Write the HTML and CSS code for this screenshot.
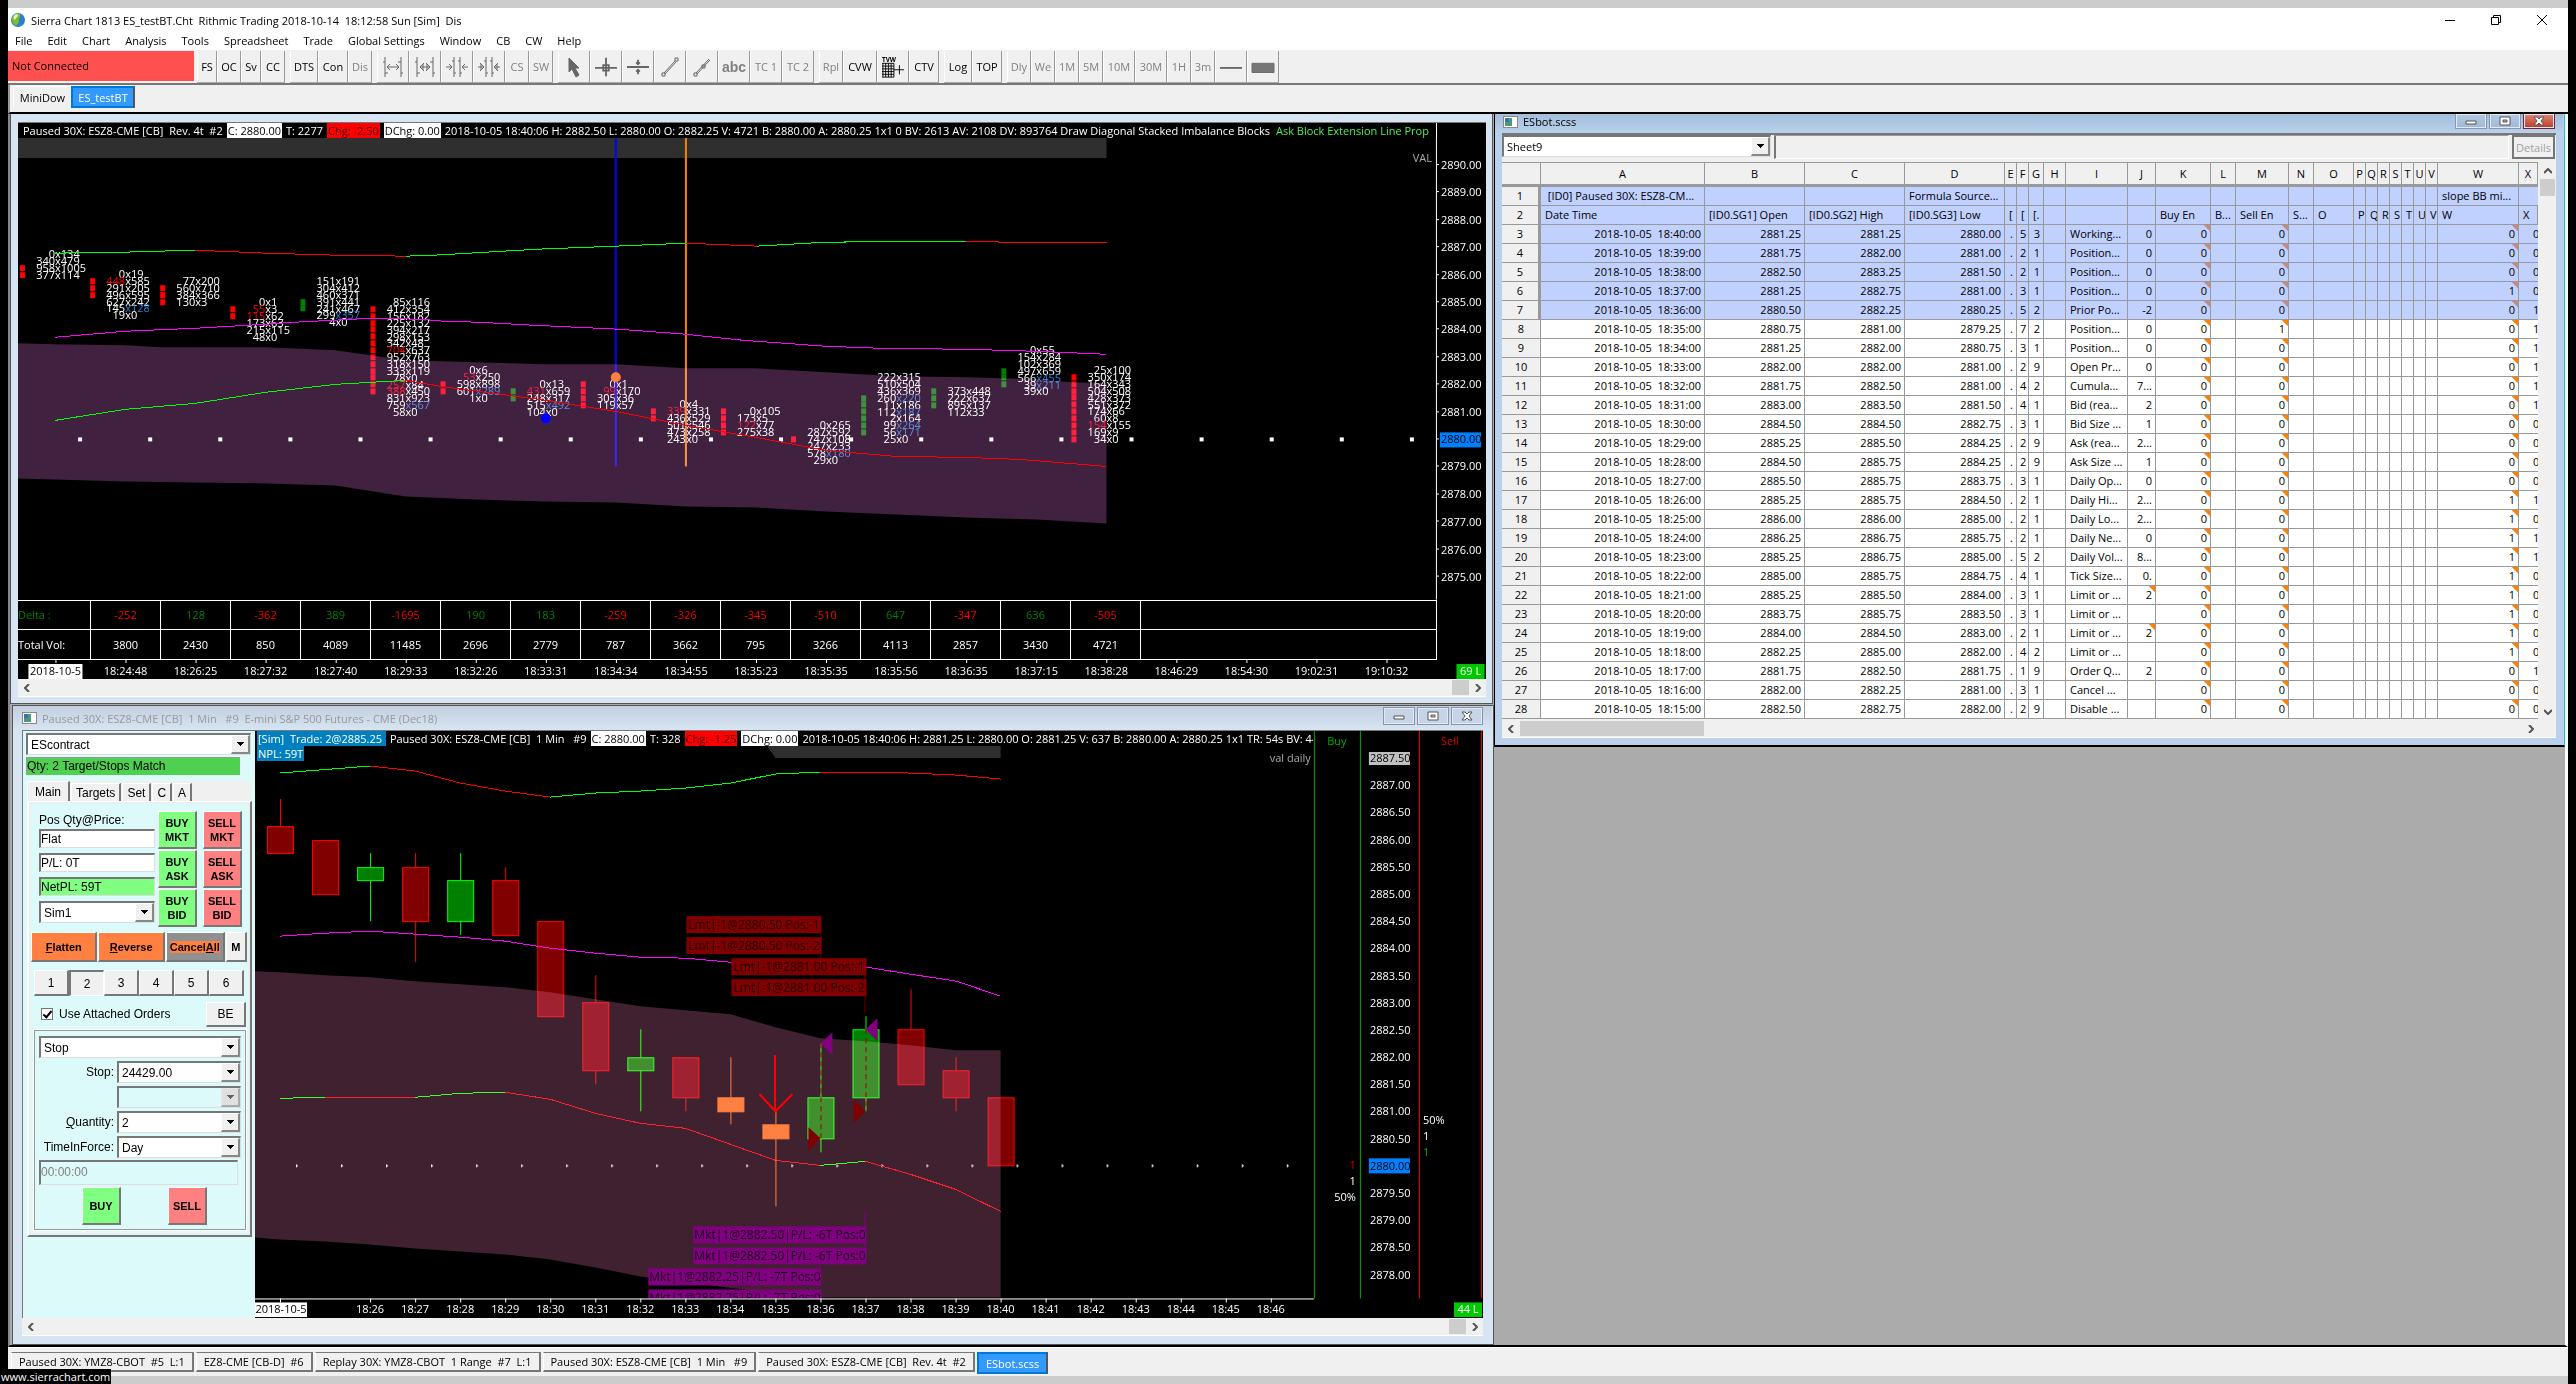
FILE: index.html
```html
<!DOCTYPE html>
<html lang="en">
<head>
<meta charset="utf-8">
<title>Sierra Chart</title>
<link rel="stylesheet" href="styles.css">
</head>
<body>
<div class="app">
  <header class="titlebar">
    <svg class="globe" viewBox="0 0 14 14" width="14" height="14"><circle cx="7" cy="7" r="7" fill="#2f7fd0"/><path d="M2 3C4 0 8 0 9 1C10 4 7 5 8 8C7 12 5 13 4 12C1 10 0 6 2 3Z" fill="#7fbf2a"/><path d="M3 3C4 1 7 1 7 2C7 4 4 5 4 7C3 6 2 5 3 3Z" fill="#e8f6c0"/></svg>
    <span class="apptitle">Sierra Chart 1813 ES_testBT.Cht  Rithmic Trading 2018-10-14  18:12:58 Sun [Sim]  Dis</span>
    <div class="appctl">
      <button aria-label="Minimize"><svg viewBox="0 0 12 12" width="12" height="12"><path d="M1 6.5H11" stroke="#000"/></svg></button>
      <button aria-label="Restore"><svg viewBox="0 0 12 12" width="12" height="12"><path d="M1.5 3.5H8.5V10.5H1.5ZM3.5 3.5V1.5H10.5V8.5H8.5" fill="none" stroke="#000"/></svg></button>
      <button aria-label="Close"><svg viewBox="0 0 12 12" width="12" height="12"><path d="M1 1L11 11M11 1L1 11" stroke="#000"/></svg></button>
    </div>
  </header>
  <nav class="menu"><a href="#">File</a><a href="#">Edit</a><a href="#">Chart</a><a href="#">Analysis</a><a href="#">Tools</a><a href="#">Spreadsheet</a><a href="#">Trade</a><a href="#">Global Settings</a><a href="#">Window</a><a href="#">CB</a><a href="#">CW</a><a href="#">Help</a></nav>
  <div class="toolbar">
    <div class="conn">Not Connected</div>
    <div class="grp"><button class="w20">FS</button><button class="w24">OC</button><button class="w20">Sv</button><button class="w24">CC</button></div>
    <div class="grp"><button class="w28">DTS</button><button class="w30">Con</button><button class="w24 off">Dis</button></div>
    <div class="grp off">
      <button class="w32" aria-label="Bars wider"><svg viewBox="0 0 20 20"><path d="M2 0V20M0 5H2M2 16H5M18 0V20M15 5H18M18 16H20M5 10H15M7 7L4 10L7 13M13 7L16 10L13 13"/></svg></button>
      <button class="w32" aria-label="Bars wide"><svg viewBox="0 0 20 20"><path d="M2 0V20M0 5H2M2 16H5M18 0V20M15 5H18M18 16H20M5 10H15M9 6L5 10L9 14M11 6L15 10L11 14M8 7V13M12 7V13"/></svg></button>
      <button class="w32" aria-label="Bars narrow"><svg viewBox="0 0 22 20"><path d="M8 0V20M14 0V20M6 4H8M8 16H10M12 4H14M14 16H16M0 10H6M3 7L6 10L3 13M22 10H16M19 7L16 10L19 13"/></svg></button>
      <button class="w32" aria-label="Bars narrower"><svg viewBox="0 0 22 20"><path d="M8 0V20M14 0V20M6 4H8M8 16H10M12 4H14M14 16H16M0 10H6M2 6L6 10L2 14M3 7V13M22 10H16M20 6L16 10L20 14M19 7V13"/></svg></button>
      <button class="w24">CS</button><button class="w24">SW</button>
    </div>
    <div class="grp off">
      <button class="w32" aria-label="Pointer"><svg viewBox="0 0 20 20"><path fill="#666" d="M5 1V15L8 12L12 20L15 18L11 11H15Z"/></svg></button>
      <button class="w32" aria-label="Crosshair"><svg viewBox="0 0 24 20"><path stroke-width="2" d="M12 0V20M0 11H24M9 8H15V14H9Z"/></svg></button>
      <button class="w32" aria-label="Crosshair 2"><svg viewBox="0 0 24 20"><path stroke-width="2" d="M12 2V7M12 13V18M0 10H24M10 5L12 7L14 5M10 15L12 13L14 15"/></svg></button>
      <button class="w32" aria-label="Line"><svg viewBox="0 0 20 20"><path d="M2 16H5V19H2ZM15 1H18V4H15ZM4 16L15 4M5 17L16 5"/></svg></button>
      <button class="w32" aria-label="Ray"><svg viewBox="0 0 20 20"><path d="M2 16H5V19H2ZM10 8H13V11H10ZM4 16L17 2M5 17L18 3"/></svg></button>
      <button class="w32 abc">abc</button><button class="w32">TC 1</button><button class="w32">TC 2</button>
    </div>
    <div class="grp"><button class="w24 off">Rpl</button><button class="w34">CVW</button>
      <button class="w32" aria-label="TVW"><svg class="dark" viewBox="0 0 24 24"><text x="0" y="6" font-size="7">TVW</text><path d="M1 8V23M4 8V23M7 8V23M10 8V23M13 8V23M0 8H13M0 11H13M0 14H13M0 17H13M0 20H13M0 23H13M13 15H24M19 10V20"/></svg></button>
      <button class="w30">CTV</button></div>
    <div class="grp"><button class="w28">Log</button><button class="w30">TOP</button></div>
    <div class="grp off"><button class="w24">Dly</button><button class="w24">We</button><button class="w24">1M</button><button class="w24">5M</button><button class="w32">10M</button><button class="w32">30M</button><button class="w24">1H</button><button class="w24">3m</button>
      <button class="w32" aria-label="Thin line"><svg viewBox="0 0 24 20"><path stroke-width="2" d="M0 11H24"/></svg></button>
      <button class="w32" aria-label="Thick line"><svg viewBox="0 0 24 20"><path fill="#777" d="M0 6H24V16H0Z"/></svg></button></div>
  </div>
  <div class="tabs"><button class="tab">MiniDow</button><button class="tab on">ES_testBT</button></div>

  <main class="desktop">
    <section class="win w1">
      <div class="chart chart1">
        <div class="info"><span>Paused 30X: ESZ8-CME [CB]  Rev. 4t  #2</span><b class="wh">C: 2880.00</b><span>T: 2277</span><b class="rd">Chg: -2.50</b><b class="wh">DChg: 0.00</b><span>2018-10-05 18:40:06 H: 2882.50 L: 2880.00 O: 2882.25 V: 4721 B: 2880.00 A: 2880.25 1x1 0 BV: 2613 AV: 2108 DV: 893764 Draw Diagonal Stacked Imbalance Blocks</span><span class="gr">Ask Block Extension Line Prop</span></div>
        <svg id="c1" class="plot" viewBox="19 138 1466 461"></svg>
        <div class="volwrap"><table class="vol"><tbody id="vol"></tbody></table></div>
        <svg id="c1x" class="plot" viewBox="19 659 1466 20"></svg>
      </div>
      <div class="hs"><button aria-label="Scroll left"><svg viewBox="0 0 6 8"><path d="M5 0L1 4L5 8"/></svg></button><i class="thumb"></i><button aria-label="Scroll right"><svg viewBox="0 0 6 8"><path d="M1 0L5 4L1 8"/></svg></button></div>
    </section>

    <section class="win w2">
      <div class="wtitle"><svg class="wicon" viewBox="0 0 15 12" width="15" height="12"><path d="M0 0H15V12H0Z" fill="#888"/><path d="M1 1H14V11H1Z" fill="#fff"/><path d="M2 2H9V10H2Z" fill="#4a9a7a"/><path d="M2 2H6V6H2Z" fill="#3a6fb0"/></svg><span>Paused 30X: ESZ8-CME [CB]  1 Min   #9  E-mini S&amp;P 500 Futures - CME (Dec18)</span>
        <div class="wctl"><button aria-label="Minimize"><svg viewBox="0 0 12 10"><path d="M1 5H11V8H1Z"/></svg></button><button aria-label="Maximize"><svg viewBox="0 0 12 10"><path d="M1 1H11V9H1ZM4 4H8V6H4Z"/></svg></button><button aria-label="Close"><svg viewBox="0 0 12 10"><path d="M1 1H4L6 3L8 1H11L8 5L11 9H8L6 7L4 9H1L4 5Z"/></svg></button></div></div>
      <div class="wbody">
        <form class="trade">
          <div class="sel big"><select aria-label="Symbol"><option>EScontract</option></select></div>
          <div class="qty">Qty: 2 Target/Stops Match</div>
          <div class="ttabs"><button type="button" class="on">Main</button><button type="button">Targets</button><button type="button">Set</button><button type="button">C</button><button type="button">A</button></div>
          <div class="pane">
            <div class="top">
              <div class="fields">
                <label for="pos">Pos Qty@Price:</label><input id="pos" value="Flat">
                <input aria-label="Profit" value="P/L: 0T"><input aria-label="Net profit" class="net" value="NetPL: 59T">
                <div class="sel"><select aria-label="Account"><option>Sim1</option></select></div>
              </div>
              <div class="bs"><button type="button" class="buy">BUY<br>MKT</button><button type="button" class="sell">SELL<br>MKT</button><button type="button" class="buy">BUY<br>ASK</button><button type="button" class="sell">SELL<br>ASK</button><button type="button" class="buy">BUY<br>BID</button><button type="button" class="sell">SELL<br>BID</button></div>
            </div>
            <div class="acts"><button type="button" class="or"><u>F</u>latten</button><button type="button" class="or"><u>R</u>everse</button><button type="button" class="cancel"><span>Cancel<u>A</u>ll</span></button><button type="button" class="m">M</button></div>
            <div class="nums"><button type="button">1</button><button type="button" class="on">2</button><button type="button">3</button><button type="button">4</button><button type="button">5</button><button type="button">6</button></div>
            <div class="att"><input type="checkbox" id="att" checked><label for="att">Use Attached Orders</label><button type="button">BE</button></div>
            <div class="box">
              <div class="sel"><select aria-label="Order type"><option>Stop</option></select></div>
              <div class="row"><label for="stop">Stop:</label><div class="sel"><select id="stop"><option>24429.00</option></select></div></div>
              <div class="row"><span></span><div class="sel dis"><select aria-label="Limit" disabled></select></div></div>
              <div class="row"><label for="q"><u>Q</u>uantity:</label><div class="sel"><select id="q"><option>2</option></select></div></div>
              <div class="row"><label for="tif">TimeInForce:</label><div class="sel"><select id="tif"><option>Day</option></select></div></div>
              <input class="time" aria-label="Time" disabled value="00:00:00">
              <div class="bs2"><button type="button" class="buy">BUY</button><button type="button" class="sell">SELL</button></div>
            </div>
          </div>
        </form>
        <div class="chart chart2">
          <svg id="c2" class="plot" viewBox="255 731 1227 586"></svg>
          <div class="info over"><b class="bl">[Sim]  Trade: 2@2885.25 </b><span>Paused 30X: ESZ8-CME [CB]  1 Min   #9</span><b class="wh">C: 2880.00</b><span>T: 328</span><b class="rd">Chg: -1.25</b><b class="wh">DChg: 0.00</b><span>2018-10-05 18:40:06 H: 2881.25 L: 2880.00 O: 2881.25 V: 637 B: 2880.00 A: 2880.25 1x1 TR: 54s BV: 44</span></div>
          <div class="npl">NPL: 59T</div>
        </div>
      </div>
      <div class="hs"><button aria-label="Scroll left"><svg viewBox="0 0 6 8"><path d="M5 0L1 4L5 8"/></svg></button><i class="thumb"></i><button aria-label="Scroll right"><svg viewBox="0 0 6 8"><path d="M1 0L5 4L1 8"/></svg></button></div>
    </section>

    <section class="win w3">
      <div class="wtitle"><svg class="wicon" viewBox="0 0 15 12" width="15" height="12"><path d="M0 0H15V12H0Z" fill="#888"/><path d="M1 1H14V11H1Z" fill="#fff"/><path d="M2 2H9V10H2Z" fill="#4a9a7a"/><path d="M2 2H6V6H2Z" fill="#3a6fb0"/></svg><span>ESbot.scss</span>
        <div class="wctl"><button aria-label="Minimize"><svg viewBox="0 0 12 10"><path d="M1 5H11V8H1Z"/></svg></button><button aria-label="Maximize"><svg viewBox="0 0 12 10"><path d="M1 1H11V9H1ZM4 4H8V6H4Z"/></svg></button><button class="x" aria-label="Close"><svg viewBox="0 0 12 10"><path d="M1 1H4L6 3L8 1H11L8 5L11 9H8L6 7L4 9H1L4 5Z"/></svg></button></div></div>
      <div class="sheet">
        <div class="sbar"><div class="sel"><select aria-label="Sheet"><option>Sheet9</option></select></div><input class="formula" aria-label="Formula"><button class="details" disabled>Details</button></div>
        <div class="gridrow">
          <div class="gridclip"><table class="grid" id="grid"></table></div>
          <div class="vs"><button aria-label="Scroll up"><svg viewBox="0 0 8 6"><path d="M0 5L4 1L8 5"/></svg></button><i class="thumb"></i><button class="dn" aria-label="Scroll down"><svg viewBox="0 0 8 6"><path d="M0 1L4 5L8 1"/></svg></button></div>
        </div>
        <div class="hs"><button aria-label="Scroll left"><svg viewBox="0 0 6 8"><path d="M5 0L1 4L5 8"/></svg></button><i class="thumb"></i><button aria-label="Scroll right"><svg viewBox="0 0 6 8"><path d="M1 0L5 4L1 8"/></svg></button><span class="grip"></span></div>
      </div>
    </section>
  </main>

  <footer class="wtabs"><button>Paused 30X: YMZ8-CBOT  #5  L:1</button><button>EZ8-CME [CB-D]  #6</button><button>Replay 30X: YMZ8-CBOT  1 Range  #7  L:1</button><button>Paused 30X: ESZ8-CME [CB]  1 Min   #9</button><button>Paused 30X: ESZ8-CME [CB]  Rev. 4t  #2</button><button class="on">ESbot.scss</button></footer>
</div>
<div class="url">www.sierrachart.com</div>
<script src="script.js"></script>
</body>
</html>
```
FILE: styles.css
```css
* { box-sizing: border-box; }
body { margin: 0; background: #000; height: 100vh; overflow: hidden; font: 11px/15px "Open Sans", "Noto Sans", sans-serif; color: #000; }
button, select, input { font: inherit; color: inherit; margin: 0; padding: 0; border-radius: 0; border: 0; }
table { border-collapse: separate; border-spacing: 0; }
.app { display: flex; flex-direction: column; height: 100%; margin: 0 8px; border: solid #ccc; border-width: 8px 0; background: #f0f0f0; }
.titlebar { background: #fff; display: flex; align-items: center; height: 24px; padding: 0 20px 0 3px; }
.globe { margin-right: 6px; }
.apptitle { white-space: pre; flex: 1; }
.appctl { display: flex; gap: 34px; }
.appctl button { background: none; width: 12px; height: 12px; }
.appctl svg { display: block; }
.menu { background: #fff; display: flex; height: 18px; padding-left: 7px; gap: 15px; white-space: nowrap; line-height: 17px; }
.menu a { color: #000; text-decoration: none; }
.toolbar { display: flex; height: 35px; padding-top: 1px; border-bottom: 2px solid #777; gap: 5px; }
.conn { width: 186px; height: 30px; background: #ff5050; line-height: 30px; padding-left: 4px; margin-right: -2px; }
.grp { display: flex; height: 32px; border-bottom: 1px solid #aaa; }
.grp button { background: none; border-right: 1px solid #999; border-left: 1px solid #fff; white-space: nowrap; color: #000; display: flex; align-items: center; justify-content: center; }
.grp.off button, .grp .off { color: #808080; }
.grp svg { width: 22px; height: 20px; overflow: visible; fill: none; stroke: #666; stroke-width: 1; }
.grp svg.dark { height: 24px; stroke: #000; }
.grp svg text { fill: #000; stroke: none; font-weight: 700; }
.grp .abc { font: 700 14px "Liberation Sans", sans-serif; color: #666; }
.w20 { width: 20px; } .w24 { width: 24px; } .w28 { width: 28px; } .w30 { width: 30px; } .w32 { width: 32px; } .w34 { width: 34px; }
.tabs { display: flex; align-items: flex-start; height: 29px; padding: 1px 0 0 3px; border-bottom: 2px solid #000; border-left: 2px solid #999; }
.tab { height: 21px; width: 58px; background: #f0f0f0; border-left: 1px solid #fff; border-top: 1px solid #fff; }
.tab.on { background: #39f; border: 2px solid #0078d7; border-right-color: #555; color: #fff; width: 64px; height: 22px; }

.desktop { position: relative; flex: 1; overflow: hidden; background: #ababab; border-left: 2px solid #888; border-right: 3px solid #fff; border-bottom: 2px solid #000; }
.win { position: absolute; display: flex; flex-direction: column; background: #d7e4f2; border: 1px solid #555; }
.w1 { left: 0; top: 0; width: 1483px; height: 590px; border-top: 0; padding: 8px 6px 6px 7px; }
.w2 { left: 2px; top: 591px; width: 1482px; bottom: 0; padding: 0 10px 8px 9px; }
.w3 { left: 1484px; top: 0; right: 0; height: 633px; background: #b9d1ea; padding: 0 8px 7px 7px; border: solid #000; border-width: 0 1px 2px; border-right-color: #2bd; }
.chart { background: #000; color: #fff; position: relative; flex: 1; border-top: 1px solid #777; min-height: 0; overflow: hidden; }
.plot { display: block; width: 100%; font-size: 11px; }
.info { display: flex; height: 15px; gap: 4px; padding-left: 5px; margin-right: 49px; border-right: 1px solid #fff; white-space: pre; overflow: hidden; line-height: 15px; }
.info b { font-weight: 400; padding: 0 1px; }
.wh { background: #fff; color: #000; } .rd { background: #f00; color: #400; } .bl, .npl { background: #0080c0; color: #fff; } .gr { color: #50f050; padding-left: 2px; }
.info.over { position: absolute; left: 0; top: 0; right: 170px; margin: 0; padding-left: 2px; border: 0; }
.npl { position: absolute; left: 2px; top: 15px; height: 15px; padding: 0 1px; }
.volwrap { margin-right: 49px; border-right: 1px solid #fff; }
.vol { table-layout: fixed; width: 100%; height: 60px; border-bottom: 1px solid #fff; }
.vol td, .vol th { border-top: 1px solid #fff; border-right: 1px solid #fff; width: 70px; padding: 0; text-align: center; font-weight: 400; }
.vol th { width: 73px; text-align: left; }
.vol td:last-child { width: auto; border-right: 0; }
.vol .neg { color: #f00; } .vol .pos { color: #008000; }
.hs { display: flex; height: 18px; background: #f0f0f0; align-items: center; border-bottom: 1px solid #fff; }
.hs button, .vs button { background: none; width: 17px; height: 17px; display: flex; align-items: center; justify-content: center; }
.hs svg { width: 6px; height: 8px; fill: none; stroke: #555; stroke-width: 2; }
.vs svg { width: 8px; height: 6px; fill: none; stroke: #555; stroke-width: 2; }
.hs .thumb { width: 17px; height: 15px; background: #cdcdcd; margin-left: auto; }
.wtitle { display: flex; height: 24px; flex: none; align-items: center; white-space: pre; color: #999; background: linear-gradient(#c2cfdf, #d7e4f2); margin: 0 -9px; padding: 0 9px; }
.wicon { margin-right: 5px; }
.wctl { display: flex; gap: 2px; margin-left: auto; align-self: flex-start; }
.wctl button { width: 32px; height: 18px; margin-top: 1px; border: 1px solid #8496b0; background: #c6d4e6; box-shadow: inset 0 0 0 1px #e2ebf5; display: flex; align-items: center; justify-content: center; }
.wctl svg { width: 12px; height: 10px; fill: #fff; stroke: #555; fill-rule: evenodd; }
.w3 .wtitle { height: 19px; color: #000; background: linear-gradient(#a3bddb, #b9d1ea); margin: 0 -7px; padding: 0 8px 4px; }
.w3 .wctl button { height: 15px; margin-top: 0; border-top: 0; background: linear-gradient(#b4c9e2, #9db8d6); }
.w3 .wctl .x { background: linear-gradient(#dc8878, #c03a20); border-color: #723; }
.wbody { display: flex; flex: 1; min-height: 0; }

.trade { width: 233px; flex: none; background: #dcfafa; border: solid #777; border-width: 1px 0 0 1px; padding: 2px 4px 0; font: 12px/14px "Liberation Sans", Arial, sans-serif; }
.sel { position: relative; border: solid; border-width: 2px 1px 1px 2px; border-color: #777 #ddd #ddd #777; background: #fff; height: 22px; }
.sel select { appearance: none; width: 100%; height: 100%; background: none; padding-left: 3px; display: block; opacity: 1; }
.sel::after { content: ""; position: absolute; right: 0; top: 0; bottom: 0; width: 16px; border: solid; border-width: 1px 2px 2px 1px; border-color: #fff #888 #888 #fff; pointer-events: none; background: linear-gradient(#000, #000) 50% 6px/7px 1px no-repeat, linear-gradient(#000, #000) 50% 7px/5px 1px no-repeat, linear-gradient(#000, #000) 50% 8px/3px 1px no-repeat, linear-gradient(#000, #000) 50% 9px/1px 1px no-repeat, #f0f0f0; }
.sel.dis { background: #dcfafa; }
.sel.dis::after { filter: contrast(.4) brightness(1.3); }
.trade > .sel { margin-left: -1px; }
.qty { height: 18px; width: 214px; background: #50d050; margin: 2px 0 6px -1px; border: solid #999; border-width: 1px 0 0 1px; line-height: 17px; }
.ttabs { display: flex; gap: 1px; align-items: flex-end; height: 20px; background: #f0f0f0; }
.ttabs button { background: #f0f0f0; border: solid; border-width: 1px 2px 0 1px; border-color: #fff #777 #fff #fff; height: 18px; padding: 0 4px; }
.ttabs .on { height: 20px; padding: 0 7px; }
.pane { height: 436px; margin-right: -1px; border: solid; border-width: 1px 2px 2px 2px; border-color: #fff #777 #777 #fff; padding: 9px 4px 0 5px; box-shadow: inset 0 0 0 2px #e8f0f0; }
.top { display: flex; gap: 3px; padding-left: 5px; }
.fields { width: 116px; }
.fields label { display: block; height: 18px; padding-top: 2px; }
.fields input { display: block; width: 100%; height: 19px; background: #fff; border: solid; border-width: 2px 1px 1px 2px; border-color: #777 #ddd #ddd #777; margin-bottom: 5px; }
.fields .net { background: #80ff80; }
.bs { display: grid; grid-template-columns: 39px 39px; column-gap: 6px; row-gap: 1px; grid-auto-rows: 38px; }
.pane button { border: solid; border-width: 1px 2px 2px 1px; border-color: #fff #777 #777 #fff; background: #f0f0f0; }
.pane .buy, .pane .sell { font-weight: 700; font-size: 11px; }
.pane .buy { background: #80ff80; } .pane .sell { background: #ff8080; }
.acts { display: flex; height: 30px; gap: 1px; margin: 5px -1px 0 -3px; font-weight: 700; font-size: 11px; }
.pane .or { background: #ff8040; flex: 66; }
.pane .cancel { background: #909090; flex: 58; }
.cancel span { background: #ff8040; }
.acts .m { flex: 19; }
.nums { display: grid; grid-template-columns: repeat(6, 35px); height: 26px; margin-top: 8px; }
.nums .on { border-width: 2px 1px 1px 2px; border-color: #777 #fff #fff #777; }
.att { display: flex; height: 26px; margin: 5px 0 3px 7px; align-items: center; }
.att input { appearance: none; width: 12px; height: 12px; border: 1px solid #777; background: #fff; margin-right: 6px; position: relative; }
.att input::after { content: ""; position: absolute; left: 3px; top: 0; width: 3px; height: 7px; border: solid #000; border-width: 0 2px 2px 0; transform: rotate(40deg); }
.att button { width: 40px; height: 25px; margin-left: auto; }
.box { border: 1px solid #999; outline: 1px solid #fff; height: 200px; padding: 5px 4px 0; }
.row { display: grid; grid-template-columns: 75px 1fr; gap: 3px; align-items: center; margin-top: 3px; text-align: right; }
.time { width: 199px; height: 25px; margin-top: 2px; display: block; background: #dcfafa; border: solid; border-width: 2px 1px 1px 2px; border-color: #777 #ddd #ddd #777; color: #808080; padding-bottom: 3px; }
.bs2 { display: flex; gap: 47px; padding: 2px 0 0 43px; }
.bs2 button { width: 39px; height: 38px; }

.sheet { background: #f0f0f0; display: flex; flex-direction: column; flex: 1; min-height: 0; border-top: 2px solid #777; }
.sbar { display: flex; height: 27px; gap: 3px; flex: none; }
.sbar .sel { width: 269px; }
.formula { flex: 1; height: 24px; background: #f0f0f0; border: solid; border-width: 1px 1px 1px 2px; border-color: #999 #fff #fff #777; }
.details { width: 43px; height: 24px; margin-right: 1px; border: 2px solid #777; background: #f0f0f0; color: #a0a0a0; }
.gridrow { display: flex; flex: 1; min-height: 0; }
.gridclip { flex: 1; overflow: hidden; }
.grid { table-layout: fixed; width: 1036px; background: #fff; }
.grid td, .grid th { height: 19px; padding: 0 3px; border-right: 1px solid #999; border-bottom: 1px solid #999; overflow: hidden; white-space: pre; text-align: right; font-weight: 400; line-height: 18px; }
.grid thead th { height: 25px; background: #f0f0f0; border-bottom-width: 3px; border-top: 1px solid #999; text-align: center; line-height: 20px; padding: 0 1px; }
.grid tbody th { background: #f0f0f0; text-align: center; }
.grid .hl td { background: #c0d0ff; }
.grid .hl th { border-right-width: 3px; }
.grid .l { text-align: left; padding-left: 4px; }
.grid td.f { background: linear-gradient(225deg, #ff8000 4px, transparent 5px); }
.grid .hl td.f { background: linear-gradient(225deg, #c48c80 4px, transparent 5px) #c0d0ff; }
.grid .cut { text-align: left; padding-left: 14px; border-right: 0; }
.vs { width: 17px; display: flex; flex-direction: column; align-items: center; }
.vs .thumb { width: 15px; height: 17px; background: #cdcdcd; }
.vs .dn { margin-top: auto; }
.w3 .hs { flex: none; }
.w3 .hs .thumb { width: 184px; margin: 0 auto 0 1px; }
.grip { width: 17px; }

.wtabs { display: flex; height: 29px; padding: 4px 0 0 3px; gap: 2px; border-top: 1px solid #fff; white-space: pre; align-items: flex-start; }
.wtabs button { white-space: pre; background: #f0f0f0; height: 20px; padding: 0 7px; border: solid; border-width: 1px 2px 2px 1px; border-color: #777 #777 #777 #fff; }
.wtabs .on { background: #39f; color: #fff; border: 2px solid #0078d7; border-right-color: #555; height: 22px; }
.url { position: absolute; left: 0; bottom: 0; height: 15px; background: #000; color: #fff; padding: 0 1px; }
```
FILE: script.js
```js
const $ = id => document.getElementById(id);
const T = (x, y, s, a = 'middle', c = '#fff', z = 11) => `<text x="${x}" y="${y + 4}" text-anchor="${a}" fill="${c}" font-size="${z}">${s}</text>`;
const R = (x, y, w, h, c, e = '') => `<rect x="${x}" y="${y}" width="${w}" height="${h}" fill="${c}" ${e}/>`;
const L = (p, c, w = 1) => `<polyline points="${p}" fill="none" stroke="${c}" stroke-width="${w}" shape-rendering="crispEdges"/>`;
const G = '#0f0', D = '#f00', M = '#f0f';

// Footprint columns: first row y, bar color, first/last bar row, then rows (r = red bid, b = blue ask)
const cols = [
  [254, D, 2, 3, '0x134 340x479 958x1005 377x114'],
  [274, D, 1, 3, '0x19 448rx585 291x205 496x595 627x242 145x128b 19x0'],
  [281, D, 1, 3, '77x200 560x710 384x366 130x3'],
  [302, D, 1, 2, '0x1 55rx3 115rx62 173x63 215x115 48x0'],
  [281, 'green', 3, 4, '151x191 304x412 460x371 391x441 241x467 299x357b 4x0'],
  [302, D, 1, 13, '85x116 412x354 156x182 225x132 394x217 298x153 342x48 704rx637 952x763 318x150 333x119 78x0 257rx84 388rx450 831x923 759x567b 58x0'],
  [370, D, 2, 3, '0x6 53rx250 598x898 601x289b 1x0'],
  [384, 'green', 1, 2, '0x13 431rx659 248x317 515x492b 104x0'],
  [384, D, 0, 3, '0x1 99rx170 305x36 119x57'],
  [404, D, 1, 2, '0x4 339rx331 436x529 501x546 473x258 243x0'],
  [411, D, 0, 3, '0x105 173x5 122rx77 275x38'],
  [425, D, 2, 2, '0x265 287x592 747x108 247x233 578x180b 29x0'],
  [377, 'green', 3, 8, '222x315 510x504 436x369 260x220b 11x186 112x187b 2x164 99x264b 56x171b 25x0'],
  [391, 'green', 0, 2, '373x448 222x637 895x137 112x33'],
  [350, 'green', 3, 5, '0x55 154x284 102x369 497x659 566x455b 39x211b 39x0'],
  [370, D, 1, 10, '25x100 350x174 164x343 504x508 428x373 551x372 174x66 60x8 154rx155 169x9 34x0']
];
const rowH = 6.85;
let s = R(19, 138, 1087, 20, '#2f2f2f') + T(1431, 158, 'VAL', 'end', '#aaa');
cols.forEach(([y, c, a, b, rows], k) => {
  const x = 56 + 70 * k;
  for (let i = a; i <= b; i++) s += R(x - 35, Math.round(y + i * rowH - 3), 5, 6, c);
  rows.split(' ').forEach((r, i) => {
    const [p, q] = r.split('x');
    s += T(x, y + i * rowH, p.replace('r', ''), 'end', p.includes('r') ? D : '#fff', 11);
    s += T(x, y + i * rowH, 'x' + q.replace('b', ''), 'start', q.includes('b') ? '#2a7fd4' : '#fff', 11);
  });
});
for (let k = 0; k < 20; k++) s += R(79 + 70 * k, 437, 4, 4, '#fff');
s += R(615, 138, 2, 328, '#00f') + '<circle cx="546" cy="418" r="5" fill="#00f"/>';
s += R(685, 138, 2, 328, '#ff8000');
s += L('56,253 126,252 196,250', G) + L('196,250 266,253 336,255 406,256', D) + L('406,256 435,255 539,249 616,246 686,243', G) + L('686,243 757,246', D) + L('757,246 826,242 966,241', G) + L('966,241 1003,242 1107,242', D);
s += L('56,337 126,331 196,328 266,324 295,322 353,319 372,318 421,319 444,321 480,322 534,325 577,327 619,329 660,332 686,334 743,340 826,346 880,348 966,349 1036,351 1106,354', M);
s += '<polygon style="mix-blend-mode:screen" fill="#40213f" points="19,343 56,344 126,345 161,347 266,347 336,350 371,355 406,360 476,362 546,364 616,364 686,368 756,368 826,372 896,376 966,377 1036,379 1070,382 1106,383 1106,523 1036,519 966,517 896,514 826,511 756,507 686,506 616,502 546,501 476,499 406,496 336,485 266,483 196,482 126,481 56,479 19,478"/>';
s += L('56,420 126,409 196,403 266,392 336,384 406,380', G) + L('406,380 441,386 546,400 616,411 686,425 756,437 826,450 896,456 966,457 1020,459 1106,466', D);
s += '<circle cx="546" cy="418" r="5" fill="#00f"/><circle cx="616" cy="377" r="5" fill="#ff8040"/>';
s += R(1435, 138, 1, 461, '#fff');
for (let p = 2890; p >= 2875; p--) {
  const y = Math.round(439 + (2880 - p) * 27.4);
  s += R(1436, y - 1, 2, 1, '#fff');
  if (p === 2880) s += R(1439, 432, 41, 15, '#0080ff');
  s += T(1440, y, p + '.00', 'start', p === 2880 ? '#000' : '#fff');
}
$('c1').innerHTML = s;

const delta = [-252, 128, -362, 389, -1695, 190, 183, -259, -326, -345, -510, 647, -347, 636, -505];
const vol = [3800, 2430, 850, 4089, 11485, 2696, 2779, 787, 3662, 795, 3266, 4113, 2857, 3430, 4721];
$('vol').innerHTML = `<tr><th class="pos">Delta :</th>${delta.map(v => `<td class="${v < 0 ? 'neg' : 'pos'}">${v}</td>`).join('')}<td></td></tr><tr><th>Total Vol:</th>${vol.map(v => `<td>${v}</td>`).join('')}<td></td></tr>`;

s = R(29, 663, 54, 15, '#fff') + T(56, 670, '2018-10-5', 'middle', '#000') + R(56, 659, 1, 3, '#fff');
'18:24:48 18:26:25 18:27:32 18:27:40 18:29:33 18:32:26 18:33:31 18:34:34 18:34:55 18:35:23 18:35:35 18:35:56 18:36:35 18:37:15 18:38:28 18:46:29 18:54:30 19:02:31 19:10:32'.split(' ').forEach((t, k) => {
  s += T(126 + 70 * k, 670, t) + R(126 + 70 * k, 659, 1, 3, '#fff');
});
s += R(1456, 663, 28, 15, '#00c800') + T(1470, 670, '69 L');
$('c1x').innerHTML = s;

// One-minute candles: high, body top, body bottom, low, color key
const candles = [
  [799, 826, 853, 853, 'r'], [840, 840, 894, 894, 'r'], [853, 867, 880, 921, 'g'], [853, 867, 921, 962, 'r'], [853, 880, 921, 935, 'g'],
  [867, 880, 935, 935, 'r'], [921, 921, 1016, 1016, 'r'], [975, 1002, 1070, 1084, 'r'], [1029, 1057, 1070, 1111, 'g'], [1057, 1057, 1097, 1111, 'r'],
  [1057, 1097, 1111, 1124, 'o'], [1111, 1124, 1138, 1206, 'o'], [1043, 1097, 1138, 1152, 'g'], [1016, 1029, 1097, 1111, 'g'], [989, 1029, 1084, 1084, 'r'],
  [1057, 1070, 1097, 1111, 'r'], [1097, 1097, 1165, 1165, 'r']
];
const pal = { r: ['#f00', '#800000'], g: ['#0f0', '#008000'], o: ['#ff8040', '#ff8040'] };
const drawCandles = pick => candles.forEach(([h, t, b, l, c], k) => {
  if (!pick.includes(c)) return;
  const x = 280 + 45 * k, [st, f] = pal[c];
  if (h < t) s += R(x, h, 1, t - h, st);
  if (l > b) s += R(x, b, 1, l - b, st);
  s += R(x - 12.5, t + .5, 26, b - t, f, `stroke="${st}"`);
});
s = '<polygon fill="#2f2f2f" points="767,746 775,758 1000,758 1000,746"/>';
drawCandles('rg');
for (let k = 0; k < 23; k++) s += R(296 + 45 * k, 1164, 1, 3, '#fff') + R(297 + 45 * k, 1165, 1, 1, '#fff');
s += L('280,773 370,766', G) + L('370,766 415,771 460,783 505,791 550,797', D) + L('550,797 595,793 640,791 685,788 730,783 775,774 820,772', G) + L('820,772 910,773 955,775 1000,779', D);
s += L('280,936 325,933 370,931 415,934 460,937 505,941 550,948 595,953 640,957 685,958 730,962 775,965 866,967 910,974 956,981 1000,996', M);
s += L('280,1098 325,1097', G) + L('325,1097 415,1097', D) + L('415,1097 460,1093 505,1092', G) + L('505,1092 550,1099 595,1113 640,1123 685,1128 730,1144 775,1160 820,1165', D) + L('820,1165 865,1161', G) + L('865,1161 910,1174 955,1189 1000,1211', D);
s += '<polygon style="mix-blend-mode:screen" fill="#40212f" points="255,971 280,972 325,975 370,977 415,981 460,984 505,987 550,992 595,999 640,1006 685,1010 730,1014 775,1027 820,1038 865,1041 910,1045 955,1050 1000,1050 1000,1297 820,1297 735,1288 640,1276 595,1267 550,1259 505,1254 460,1251 415,1248 370,1244 325,1241 280,1239 255,1237"/>';
drawCandles('o');
s += '<path d="M820.5 1043V1138M865.5 1029V1111" stroke="#a00000" stroke-dasharray="5 4"/>';
s += '<path d="M820.5 933V958M864.5 975V1013" stroke="#600000"/><path d="M864.5 1210V1247M819.5 1264V1268" stroke="#800080"/>';
s += L('775,1055 775,1111', D, 2) + '<polyline points="759,1094 775,1111 792,1094" fill="none" stroke="#f00" stroke-width="2"/>';
s += '<path fill="#800080" d="M865 1029L877 1018V1041ZM820 1043L832 1032V1055Z"/><path fill="#800000" d="M853 1099L865 1111L853 1123ZM808 1127L820 1138L808 1151Z"/>';
[[686, 916, '80.50 Pos:-1'], [686, 937, '80.50 Pos:-2'], [731, 958, '81.00 Pos:-1'], [731, 979, '81.00 Pos:-2']].forEach(([x, y, t]) => {
  s += R(x, y, 135, 17, '#800000') + T(x + 2, y + 9, 'Lmt|-1@28' + t, 'start', '#200000', 12);
});
[[693, 1226, '50|P/L: -6T'], [693, 1247, '50|P/L: -6T'], [648, 1268, '25|P/L: -7T'], [648, 1289, '25|P/L: -7T']].forEach(([x, y, t]) => {
  s += R(x, y, 173, 17, '#800080') + T(x + 1, y + 9, `Mkt|1@2882.${t} Pos:0`, 'start', '#1a001a', 12);
});
s += R(255, 1298, 1227, 20, '#000') + R(255, 1298, 1058, 1, '#fff');
s += R(255, 1302, 52, 15, '#fff') + T(281, 1309, '2018-10-5', 'middle', '#000') + R(280, 1298, 1, 4, '#fff');
for (let m = 26; m <= 46; m++) { const x = 370 + 45 * (m - 26); s += T(x, 1309, '18:' + m) + R(x, 1298, 1, 4, '#fff'); }
s += R(1313, 731, 169, 567, '#000') + R(1313, 731, 1, 567, '#0a0') + R(1359, 731, 1, 567, '#0a0') + R(1418, 731, 1, 567, '#e00') + R(1480, 731, 1, 567, '#e00');
s += T(1336, 741, 'Buy', 'middle', '#0a0') + T(1449, 741, 'Sell', 'middle', '#d00') + T(1310, 758, 'val daily', 'end', '#aaa');
for (let i = 0; i < 20; i++) {
  const p = 2887.5 - i / 2, y = Math.round(758 + i * 27.19);
  if (!i) s += R(1368, 752, 41, 13, '#c0c0c0');
  if (p === 2880) s += R(1368, 1158, 41, 15, '#0080ff');
  s += T(1369, y, p.toFixed(2), 'start', !i || p === 2880 ? '#000' : '#fff');
}
s += T(1422, 1120, '50%', 'start') + T(1422, 1136, '1', 'start') + T(1422, 1152, '1', 'start', '#0a0');
s += T(1355, 1165, '1', 'end', '#d00') + T(1355, 1181, '1', 'end') + T(1355, 1197, '50%', 'end');
s += R(1453, 1302, 28, 15, '#00c800') + T(1467, 1309, '44 L');
$('c2').innerHTML = s;

// Spreadsheet
const widths = [39, 164, 100, 100, 100, 12, 12, 15, 22, 62, 28, 55, 25, 53, 25, 40, 12, 12, 12, 12, 12, 12, 12, 81, 19];
const O = '81.25 81.75 82.50 81.25 80.50 80.75 81.25 82.00 81.75 83.00 84.50 85.25 84.50 85.50 85.25 86.00 86.25 85.25 85.00 85.25 83.75 84.00 82.25 81.75 82.00 82.50'.split(' ');
const H = '81.25 82.00 83.25 82.75 82.25 81.00 82.00 82.00 82.50 83.50 84.50 85.50 85.75 85.75 85.75 86.00 86.75 86.75 85.75 85.50 85.75 84.50 85.00 82.50 82.25 82.75'.split(' ');
const W = '80.00 81.00 81.50 81.00 80.25 79.25 80.75 81.00 81.00 81.50 82.75 84.25 84.25 83.75 84.50 85.00 85.75 85.00 84.75 84.00 83.50 83.00 82.00 81.75 81.00 82.00'.split(' ');
const F = '52235732443223222543324132', N = '31112219211991111211112919';
const I = 'Working...|Position...|Position...|Position...|Prior Po...|Position...|Position...|Open Pr...|Cumula...|Bid (rea...|Bid Size ...|Ask (rea...|Ask Size ...|Daily Op...|Daily Hi...|Daily Lo...|Daily Ne...|Daily Vol...|Tick Size...|Limit or ...|Limit or ...|Limit or ...|Limit or ...|Order Q...|Cancel ...|Disable ...'.split('|');
const J = '0|0|0|0|-2|0|0|0|7...|2|1|2...|1|0|2...|2...|0|8...|0.|2||2||2||'.split('|');
const SL = '00010000000000111111111000', X = '00001111110000101100000100';
const td = (v = '', c = '') => `<td class="${c}">${v}</td>`;
let h = '<colgroup>' + widths.map(w => `<col style="width:${w}px">`).join('') + '</colgroup><thead><tr><th></th>' + [...'ABCDEFGHIJKLMNOPQRSTUVWX'].map(c => `<th>${c}</th>`).join('') + '</tr></thead><tbody>';
h += '<tr class="hl"><th>1</th>' + td(' [ID0] Paused 30X: ESZ8-CM...', 'l') + td() + td() + td('Formula Source...', 'l') + td().repeat(18) + td('slope BB mi...', 'l') + td('', 'cut') + '</tr>';
h += '<tr class="hl"><th>2</th>' + ['Date Time', '[ID0.SG1] Open', '[ID0.SG2] High', '[ID0.SG3] Low', '[', '[', '[.', '', '', '', 'Buy En', 'B...', 'Sell En', 'S...', 'O', 'P', 'Q', 'R', 'S', 'T', 'U', 'V', 'W', 'X'].map(v => td(v, 'l')).join('') + '</tr>';
for (let i = 0; i < 26; i++) {
  h += `<tr class="${i < 5 ? 'hl' : ''}"><th>${i + 3}</th>` + td(`2018-10-05  18:${40 - i}:00`) + td('28' + O[i]) + td('28' + H[i]) + td('28' + W[i]) + td('.') + td(F[i]) + td(N[i]) + td() + td(I[i], 'l') + td(J[i], i === 19 || i === 21 ? 'f' : '') + td('0', 'f') + td() + td(i === 5 ? '1' : '0', 'f') + td().repeat(9) + td(SL[i], 'f') + td(X[i], 'cut') + '</tr>';
}
$('grid').innerHTML = h + '</tbody>';
```
